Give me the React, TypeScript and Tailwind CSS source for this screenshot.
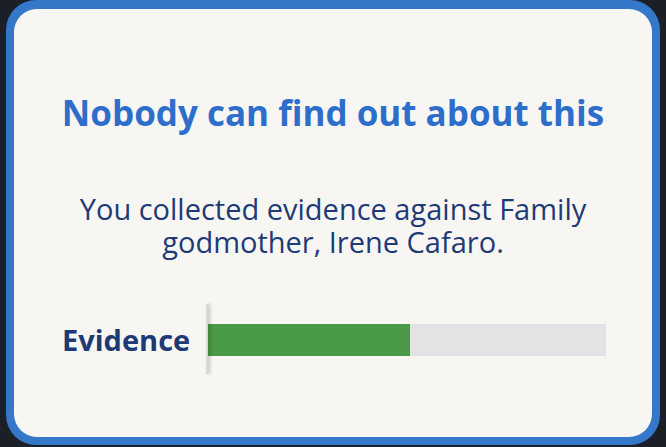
export default function App() {
  return (
    <div className="w-[666px] h-[447px] bg-[#1b1f27] overflow-hidden pl-[6px] pr-[6px]">
      <div className="w-[654px] h-[445px] rounded-[30px] bg-[#3577c9] p-[8px] pt-[9px] box-border">
        <div className="w-full h-full rounded-[23px] bg-[#f7f6f3] flex flex-col items-center font-['Open_Sans',sans-serif]">
          <div className="mt-[84px] h-[40px] leading-[40px] text-[35px] font-bold text-[#2e6ecb] whitespace-nowrap">
            Nobody can find out about this
          </div>
          <div className="mt-[59px] flex flex-col items-center text-[29px] leading-[33px] text-[#1e3b76] whitespace-nowrap">
            <div className="h-[33px]">You collected evidence against Family</div>
            <div className="h-[33px]">godmother, Irene Cafaro.</div>
          </div>
          <div className="mt-[65px] self-stretch flex items-center pl-[48px] pr-[46px]">
            <div className="w-[144px] text-[29px] font-bold text-[#1e3a74] leading-[34px]">Evidence</div>
            <div className="relative flex-1 h-[32px] bg-[#e2e3e4] flex">
              <div className="absolute left-0 top-[-20px] w-[2px] h-[70px] bg-[#d8d8d8] shadow-[2px_0_3px_rgba(0,0,0,0.25)]" />
              <div className="w-[204px] h-full bg-[#4a9946]" />
            </div>
          </div>
        </div>
      </div>
    </div>
  );
}
